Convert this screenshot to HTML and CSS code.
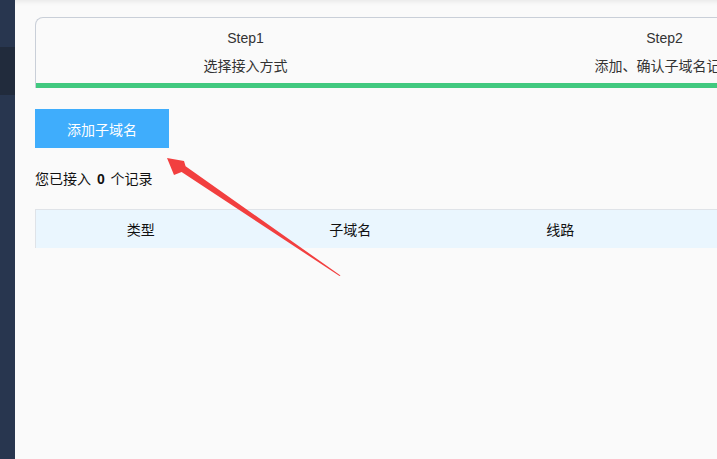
FILE: index.html
```html
<!DOCTYPE html>
<html>
<head>
  <title>子域名接入</title>
  <link rel="stylesheet" href="styles.css">
</head>
<body>
  <div class="sidebar">
    <div class="sidebar-active"></div>
  </div>

  <div class="main">
    <div class="steps">
      <div class="step-row">
        <div class="step">
          <div class="step-title">Step1</div>
          <div class="step-desc">选择接入方式</div>
        </div>
        <div class="step">
          <div class="step-title">Step2</div>
          <div class="step-desc">添加、确认子域名记录</div>
        </div>
      </div>
      <div class="step-bar"></div>
    </div>

    <button class="btn-add" type="button">添加子域名</button>

    <p class="record-count">您已接入 <b>0</b> 个记录</p>

    <table class="record-table">
      <thead>
        <tr>
          <th>类型</th>
          <th>子域名</th>
          <th>线路</th>
          <th>记录值</th>
        </tr>
      </thead>
    </table>

    <!-- hint arrow pointing at the add button -->
    <svg class="hint-arrow" width="717" height="459" viewBox="0 0 717 459">
      <polygon points="167,158 184,161 185.6,166.3 340.5,275.5 339.5,276 181.6,172.1 174,175" fill="#f23f3f"/>
    </svg>
  </div>
</body>
</html>
```

FILE: styles.css
```css
body {
  margin: 0;
  display: flex;
  height: 459px;
  overflow: hidden;
  font-family: "Liberation Sans", "Noto Sans CJK SC", sans-serif;
  font-size: 14px;
  color: #222;
}

.sidebar {
  width: 15px;
  flex-shrink: 0;
  background-color: #28364f;
  padding-top: 47px;
}

.sidebar-active {
  height: 48px;
  background-color: #212b3c;
}

.main {
  flex: 1;
  background-color: #fafafa;
  padding: 17px 0 0 20px;
  box-shadow: inset 0 6px 6px -6px rgba(0, 0, 0, 0.12);
  overflow: hidden;
}

.steps {
  width: 838px;
  border: 1px solid #c9cfd8;
  border-bottom: none;
  border-right: none;
  border-radius: 8px 0 0 0;
}

.step-row {
  display: flex;
  height: 65px;
}

.step {
  width: 419px;
  text-align: center;
  color: #333;
  padding-top: 10px;
}

.step-title {
  line-height: 20px;
}

.step-desc {
  line-height: 20px;
  margin-top: 8px;
}

.step-bar {
  height: 5px;
  background-color: #41c97f;
}

.btn-add {
  display: block;
  margin-top: 21px;
  width: 134px;
  height: 39px;
  border: none;
  background-color: #3fadfc;
  color: #fff;
  font-family: inherit;
  font-size: 14px;
  cursor: pointer;
}

.record-count {
  margin: 21px 0 0;
  line-height: 20px;
  color: #111;
}

.record-count b {
  margin: 0 2px;
}

.record-table {
  margin-top: 20px;
  border-collapse: collapse;
  width: 840px;
  table-layout: fixed;
}

.record-table th {
  height: 38px;
  background-color: #eaf6fe;
  border-top: 1px solid #dfe3e8;
  font-weight: normal;
  color: #111;
  text-align: center;
  padding: 0;
}

.record-table th:first-child {
  border-left: 1px solid #dfe3e8;
}

.hint-arrow {
  position: absolute;
  left: 0;
  top: 0;
  pointer-events: none;
}
```
